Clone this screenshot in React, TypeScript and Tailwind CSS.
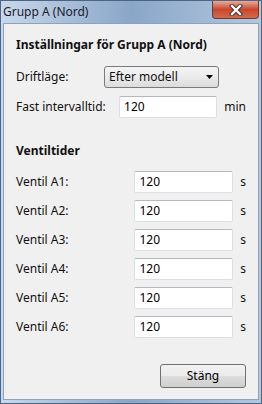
import React from 'react';

const FONT = { fontFamily: '"Noto Sans", "Open Sans", Arial, sans-serif' };

const VALVES = ['A1', 'A2', 'A3', 'A4', 'A5', 'A6'];

function TextBox({ value, w }: { value: string; w: string }) {
  return (
    <div
      className={`${w} flex h-[22px] items-center rounded-[2px] border border-[#dcdfe4] border-t-[#b5b8bf] bg-white pl-[4px] text-[12px] text-black`}
    >
      {value}
    </div>
  );
}

function CloseGlyph() {
  return (
    <svg width="14" height="12" viewBox="0 0 14 12">
      <path d="M3 2 L11 10 M11 2 L3 10" stroke="#3d2a2a" strokeWidth="4.2" strokeLinecap="square" />
      <path d="M3 2 L11 10 M11 2 L3 10" stroke="#ffffff" strokeWidth="2.4" strokeLinecap="square" />
    </svg>
  );
}

export default function App() {
  return (
    <div
      className="flex h-[404px] w-[262px] flex-col border border-[#4c6585] bg-gradient-to-r from-[#c9d8ea] via-[#8aa6c8] to-[#b3c7de]"
      style={FONT}
    >
      {/* title bar */}
      <div className="flex h-[22px] items-start justify-between">
        <span className="pl-[2px] pt-[3px] text-[12px] leading-[16px] text-[#1b1b2e]">Grupp A (Nord)</span>
        <div className="mr-[2px] flex h-[18px] w-[47px] items-center justify-center rounded-b-[4px] border border-t-0 border-[#6b3a33] bg-gradient-to-b from-[#e7a999] via-[#c8472c] to-[#d56a4c]">
          <CloseGlyph />
        </div>
      </div>

      {/* client area */}
      <div className="mx-[2px] flex flex-1 flex-col border border-[#8ea2bb] bg-[#f0f0f0] px-[12px] pt-[13px] text-[12px] text-[#111]">
        <div className="h-[16px] font-bold leading-[16px]">Inställningar för Grupp A (Nord)</div>

        <div className="mt-[13px] flex h-[22px] items-center">
          <span className="w-[88px]">Driftläge:</span>
          <div className="flex h-[22px] w-[115px] items-center justify-between rounded-[3px] border border-[#7a7a7a] bg-gradient-to-b from-[#f4f4f4] via-[#ebebeb] to-[#dcdcdc] pl-[4px] pr-[5px]">
            <span>Efter modell</span>
            <svg width="7" height="4" viewBox="0 0 7 4">
              <path d="M0 0 H7 L3.5 4 Z" fill="#000" />
            </svg>
          </div>
        </div>

        <div className="mt-[8px] flex h-[21px] items-center">
          <span className="w-[104px]">Fast intervalltid:</span>
          <TextBox value="120" w="w-[99px]" />
          <span className="ml-[7px]">min</span>
        </div>

        <div className="mt-[26px] h-[16px] font-bold leading-[16px]">Ventiltider</div>

        <div className="mt-[12px] flex flex-col gap-[7px]">
          {VALVES.map((v) => (
            <div key={v} className="flex h-[22px] items-center">
              <span className="w-[120px]">Ventil {v}:</span>
              <TextBox value="120" w="w-[100px]" />
              <span className="ml-[7px]">s</span>
            </div>
          ))}
        </div>

        <div className="mt-[26px] flex justify-end pr-[0px]">
          <button
            type="button"
            className="flex h-[24px] w-[86px] items-center justify-center rounded-[3px] border border-[#707070] bg-[linear-gradient(#f2f2f2,#ebebeb_50%,#dddddd_50%,#cfcfcf)] text-[12px] text-black"
          >
            Stäng
          </button>
        </div>
      </div>
      <div className="h-[3px]" />
    </div>
  );
}
